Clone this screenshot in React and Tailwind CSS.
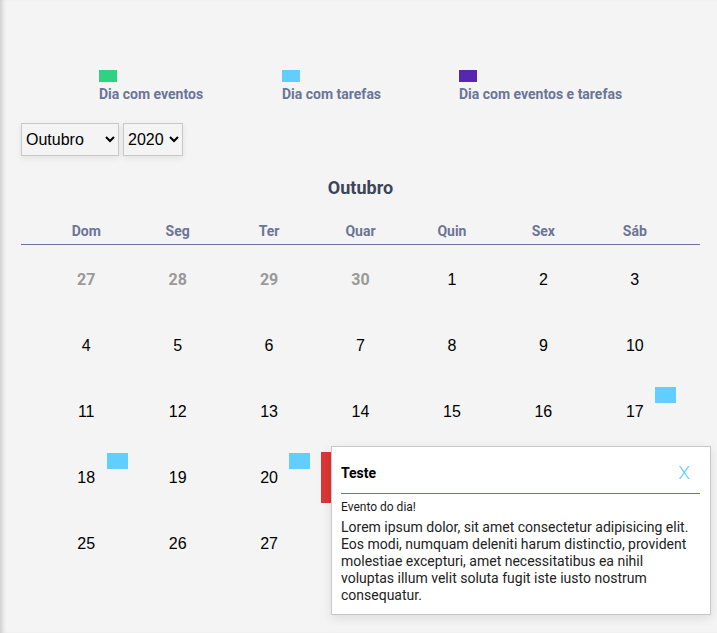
import React from "react";

const days = [
  [{ d: 27, o: true }, { d: 28, o: true }, { d: 29, o: true }, { d: 30, o: true }, { d: 1 }, { d: 2 }, { d: 3 }],
  [{ d: 4 }, { d: 5 }, { d: 6 }, { d: 7 }, { d: 8 }, { d: 9 }, { d: 10 }],
  [{ d: 11 }, { d: 12 }, { d: 13 }, { d: 14 }, { d: 15 }, { d: 16 }, { d: 17, m: "blue" }],
  [{ d: 18, m: "blue" }, { d: 19 }, { d: 20, m: "blue" }, { d: null, m: "red" }, { d: null }, { d: null }, { d: null }],
  [{ d: 25 }, { d: 26 }, { d: 27 }, { d: null }, { d: null }, { d: null }, { d: null }],
];

const heads = ["Dom", "Seg", "Ter", "Quar", "Quin", "Sex", "Sáb"];

export default function App() {
  return (
    <div
      className="relative w-[717px] h-[633px] overflow-hidden bg-[#f4f4f4] shadow-[inset_5px_0_5px_-3px_rgba(0,0,0,0.18)]"
      style={{ fontFamily: "Roboto, 'Liberation Sans', Arial, sans-serif" }}
    >
      <div className="ml-[21px] w-[679px] pt-[70px]">
        {/* Legend */}
        <div className="flex pl-[78px] text-[14px] leading-[16px] font-bold text-[#6b7597]">
          <div className="flex flex-col gap-[4px] w-[183px]">
            <span className="block w-[18px] h-[12px] bg-[#2ed281]" />
            <span>Dia com eventos</span>
          </div>
          <div className="flex flex-col gap-[4px] w-[177px]">
            <span className="block w-[18px] h-[12px] bg-[#62cdff]" />
            <span>Dia com tarefas</span>
          </div>
          <div className="flex flex-col gap-[4px]">
            <span className="block w-[18px] h-[12px] bg-[#5727b0]" />
            <span>Dia com eventos e tarefas</span>
          </div>
        </div>

        {/* Selects */}
        <div className="flex gap-[4px] mt-[21px]" style={{ fontFamily: "'Liberation Sans', Arial, sans-serif" }}>
          <select
            defaultValue="10"
            className="w-[98px] h-[33px] border border-[#c8c8c8] bg-[#f4f4f4] text-[16px] text-black pl-0 shadow-[0_2px_6px_rgba(0,0,0,0.08)]"
          >
            <option value="10">Outubro</option>
          </select>
          <select
            defaultValue="2020"
            className="w-[60px] h-[33px] border border-[#c8c8c8] bg-[#f4f4f4] text-[16px] text-black pl-0 shadow-[0_2px_6px_rgba(0,0,0,0.08)]"
          >
            <option value="2020">2020</option>
          </select>
        </div>

        {/* Title */}
        <div className="mt-[21px] text-center text-[18px] leading-[22px] font-bold text-[#3b4557]">
          Outubro
        </div>

        {/* Header */}
        <div className="mt-[24px] border-b border-[#6b7597] pb-[5px]">
          <div className="mx-auto w-[640px] grid grid-cols-7 text-center text-[14px] leading-[16px] font-bold text-[#6b7597]">
            {heads.map((h) => (
              <div key={h}>{h}</div>
            ))}
          </div>
        </div>

        {/* Dates */}
        <div className="mx-auto w-[640px] mt-[2px]">
          {days.map((row, i) => (
            <div key={i} className="grid grid-cols-7 h-[66px]">
              {row.map((c, j) => (
                <div key={j} className="relative flex items-center justify-center">
                  {c.m === "blue" && (
                    <span className="absolute left-[66px] top-[8px] w-[21px] h-[16px] bg-[#62cdff]" />
                  )}
                  {c.m === "red" && (
                    <span className="absolute left-[6px] top-[7px] w-[30px] h-[51px] bg-[#dc3535]" />
                  )}
                  {c.d !== null &&
                    (c.o ? (
                      <span className="text-[16px] font-bold text-[#999999]">{c.d}</span>
                    ) : (
                      <span
                        className="text-[16px] text-black"
                        style={{ fontFamily: "'Liberation Sans', Arial, sans-serif" }}
                      >
                        {c.d}
                      </span>
                    ))}
                </div>
              ))}
            </div>
          ))}
        </div>
      </div>

      {/* Popup */}
      <div className="absolute left-[331px] top-[446px] w-[380px] h-[169px] bg-white border border-[#c8c8c8] shadow-[0_3px_10px_rgba(0,0,0,0.1)] pl-[9px] pr-[10px] pt-[16px]">
        <div className="flex items-center justify-between h-[20px]">
          <span className="text-[14px] leading-[20px] font-bold text-black">Teste</span>
          <span className="text-[19px] leading-[20px] text-[#62cdff] font-light mr-[10px]">X</span>
        </div>
        <div className="mt-[10px] h-px bg-[#6b7597]" />
        <div className="mt-[6px] text-[12px] leading-[14px] text-[#1a1a1a]">Evento do dia!</div>
        <p className="mt-[5px] mr-[7px] text-[14px] leading-[17px] text-[#222]">
          Lorem ipsum dolor, sit amet consectetur adipisicing elit. Eos modi, numquam deleniti harum distinctio, provident molestiae excepturi, amet necessitatibus ea nihil voluptas illum velit soluta fugit iste iusto nostrum consequatur.
        </p>
      </div>
    </div>
  );
}
